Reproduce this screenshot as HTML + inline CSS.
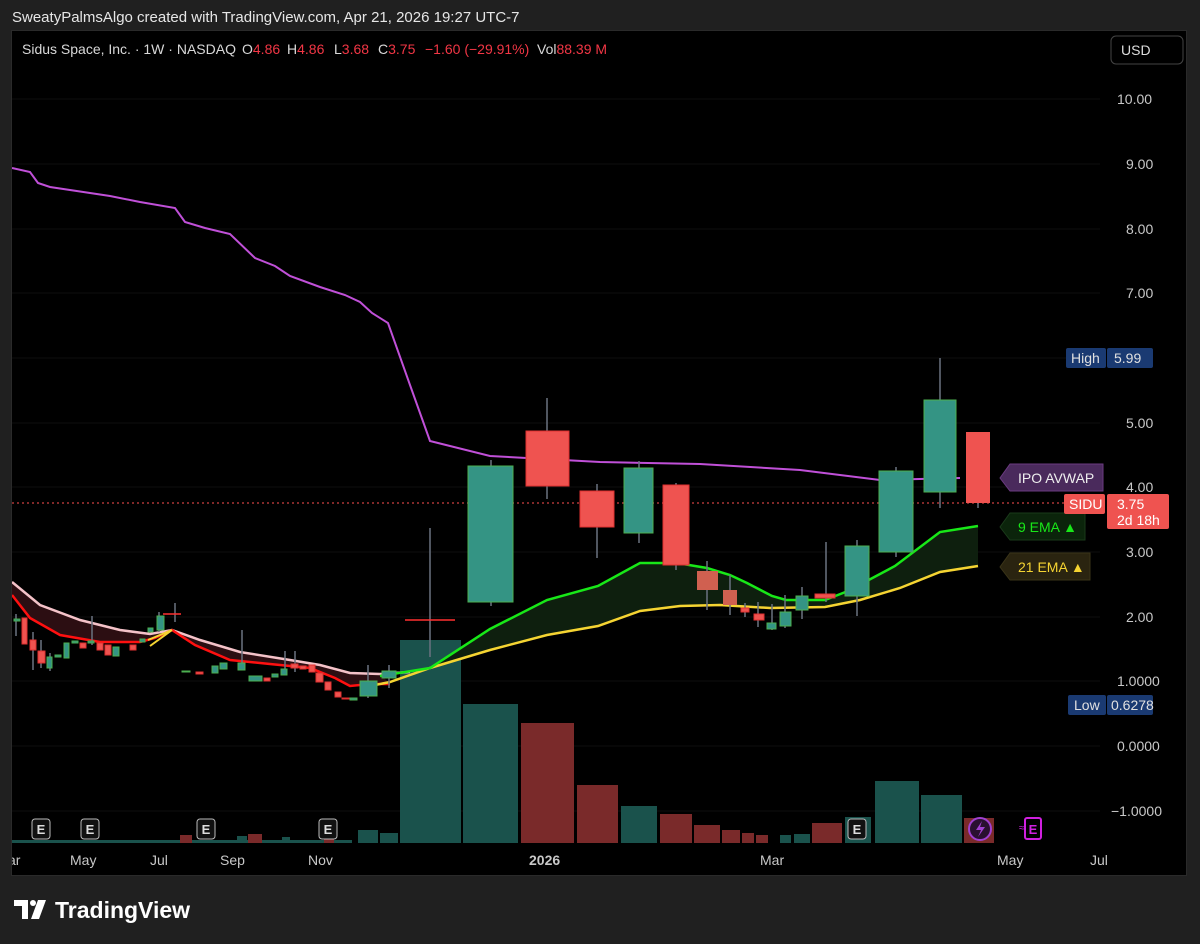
<!DOCTYPE html>
<html><head><meta charset="utf-8"><style>
body{margin:0;width:1200px;height:944px;background:#202020;font-family:"Liberation Sans",sans-serif;overflow:hidden;position:relative}
.t{position:absolute;white-space:nowrap}
</style></head><body>
<div class="t" style="left:12px;top:9px;font-size:15px;color:#e6e6e6">SweatyPalmsAlgo created with TradingView.com, Apr 21, 2026 19:27 UTC-7</div>
<div style="position:absolute;left:11px;top:30px;width:1176px;height:846px;background:#000;border:1px solid #2a2a2a;box-sizing:border-box"></div>
<svg style="position:absolute;left:0;top:0" width="1200" height="944" font-family="Liberation Sans, sans-serif">
<defs><clipPath id="c"><rect x="12" y="31" width="1174" height="844"/></clipPath></defs>
<g clip-path="url(#c)">
<g stroke="#0e0e0e" stroke-width="1">
<line x1="12" x2="1100" y1="99" y2="99"/><line x1="12" x2="1100" y1="164" y2="164"/><line x1="12" x2="1100" y1="229" y2="229"/><line x1="12" x2="1100" y1="293" y2="293"/><line x1="12" x2="1100" y1="358" y2="358"/><line x1="12" x2="1100" y1="423" y2="423"/><line x1="12" x2="1100" y1="487" y2="487"/><line x1="12" x2="1100" y1="552" y2="552"/><line x1="12" x2="1100" y1="617" y2="617"/><line x1="12" x2="1100" y1="681" y2="681"/><line x1="12" x2="1100" y1="746" y2="746"/><line x1="12" x2="1100" y1="811" y2="811"/>
</g>
<!-- volume -->
<g fill="#1a524c">
<rect x="400" y="640" width="61" height="203"/><rect x="463" y="704" width="55" height="139"/><rect x="621" y="806" width="36" height="37"/><rect x="358" y="830" width="20" height="13"/><rect x="380" y="833" width="18" height="10"/><rect x="780" y="835" width="11" height="8"/><rect x="794" y="834" width="16" height="9"/><rect x="845" y="817" width="26" height="26"/><rect x="875" y="781" width="44" height="62"/><rect x="921" y="795" width="41" height="48"/>
<rect x="12" y="840" width="340" height="3"/><rect x="237" y="836" width="10" height="7"/><rect x="282" y="837" width="8" height="6"/>
</g>
<g fill="#7a2a2a">
<rect x="521" y="723" width="53" height="120"/><rect x="577" y="785" width="41" height="58"/><rect x="660" y="814" width="32" height="29"/><rect x="694" y="825" width="26" height="18"/><rect x="722" y="830" width="18" height="13"/><rect x="742" y="833" width="12" height="10"/><rect x="756" y="835" width="12" height="8"/><rect x="812" y="823" width="30" height="20"/><rect x="964" y="818" width="30" height="25"/>
<rect x="180" y="835" width="12" height="8"/><rect x="248" y="834" width="14" height="9"/><rect x="324" y="835" width="10" height="8"/>
</g>
<!-- left EMA band -->
<path d="M12,582 L40,605 L80,620 L120,630 L150,634 L172,630 L200,640 L240,652 L290,660 L320,665 L350,673 L380,674 L390,684 L350,686 L310,668 L270,664 L230,660 L195,645 L172,630 L140,642 L100,642 L60,635 L30,618 L12,595Z" fill="#2c0e12"/>
<polyline points="12,582 40,605 80,620 120,630 150,634 172,630 200,640 240,652 290,660 320,665 350,673 380,674 410,672" fill="none" stroke="#f4c2c8" stroke-width="2.5"/>
<polyline points="12,595 30,618 60,635 100,642 140,642 155,638 172,630 195,645 230,660 270,664 310,668 335,678 350,686 370,684 390,684" fill="none" stroke="#ff1010" stroke-width="2.5"/>
<!-- right EMA band -->
<path d="M430,668 L490,629 L547,600 L598,586 L640,563 L677,563 L707,568 L730,575 L747,583 L772,596 L786,600 L825,600 L848,591 L895,566 L940,532 L978,526 L978,566 L940,572 L900,588 L860,600 L825,607 L770,608 L720,605 L680,606 L640,611 L598,626 L547,635 L490,650Z" fill="#0e1f0e"/>
<polyline points="360,688 390,682 430,668 490,650 547,635 598,626 640,611 680,606 720,605 770,608 825,607 860,600 900,588 940,572 978,566" fill="none" stroke="#f5d432" stroke-width="2.5"/>
<polyline points="148,640 172,630 150,646" fill="none" stroke="#f5d432" stroke-width="2"/>
<polyline points="380,676 430,668 490,629 547,600 598,586 640,563 677,563 707,568 730,575 747,583 772,596 786,600 825,600 848,591 895,566 940,532 978,526" fill="none" stroke="#18e818" stroke-width="2.5"/>
<!-- AVWAP -->
<polyline points="12,168 30,172 38,183 50,187 70,190 110,196 140,202 175,208 185,222 205,228 230,234 255,258 275,266 290,276 320,287 345,295 360,302 372,313 388,323 410,385 430,441 490,456 600,462 700,464 800,470 880,480 960,478" fill="none" stroke="#c050d8" stroke-width="2"/>
<line x1="12" x2="1100" y1="503" y2="503" stroke="#ff5050" stroke-dasharray="2,3" stroke-width="1"/>
<!-- wicks -->
<g stroke="#6a7280" stroke-width="1.5">
<line x1="430" x2="430" y1="528" y2="657"/><line x1="491" x2="491" y1="460" y2="606"/><line x1="547" x2="547" y1="398" y2="499"/><line x1="597" x2="597" y1="484" y2="558"/><line x1="639" x2="639" y1="461" y2="543"/><line x1="676" x2="676" y1="483" y2="570"/><line x1="707" x2="707" y1="561" y2="610"/><line x1="730" x2="730" y1="575" y2="615"/><line x1="745" x2="745" y1="603" y2="617"/><line x1="758" x2="758" y1="602" y2="627"/><line x1="772" x2="772" y1="604" y2="630"/><line x1="785" x2="785" y1="595" y2="628"/><line x1="802" x2="802" y1="587" y2="619"/><line x1="826" x2="826" y1="542" y2="602"/><line x1="857" x2="857" y1="540" y2="616"/><line x1="896" x2="896" y1="467" y2="557"/><line x1="940" x2="940" y1="358" y2="508"/><line x1="978" x2="978" y1="500" y2="508"/>
<line x1="16" x2="16" y1="614" y2="636"/><line x1="33" x2="33" y1="632" y2="670"/><line x1="41" x2="41" y1="640" y2="668"/><line x1="50" x2="50" y1="653" y2="671"/><line x1="92" x2="92" y1="616" y2="645"/><line x1="159" x2="159" y1="612" y2="632"/><line x1="175" x2="175" y1="603" y2="622"/><line x1="242" x2="242" y1="630" y2="670"/><line x1="285" x2="285" y1="651" y2="675"/><line x1="295" x2="295" y1="651" y2="672"/><line x1="368" x2="368" y1="665" y2="698"/><line x1="389" x2="389" y1="665" y2="688"/>
</g>
<!-- candles -->
<g fill="#349484" stroke="#4caf50" stroke-width="1">
<rect x="468" y="466" width="45" height="136"/><rect x="624" y="468" width="29" height="65"/><rect x="780" y="612" width="11" height="14"/><rect x="767" y="623" width="9" height="6"/><rect x="796" y="596" width="12" height="14"/><rect x="845" y="546" width="24" height="50"/><rect x="879" y="471" width="34" height="81"/><rect x="924" y="400" width="32" height="92"/>
<rect x="360" y="681" width="17" height="15"/><rect x="382" y="671" width="14" height="7"/>
<rect x="14" y="619" width="6" height="2"/><rect x="47" y="657" width="5" height="11"/><rect x="55" y="655" width="6" height="2"/><rect x="64" y="643" width="5" height="15"/><rect x="72" y="641" width="6" height="2"/><rect x="88" y="641" width="6" height="2"/><rect x="113" y="647" width="6" height="9"/><rect x="140" y="639" width="5" height="3"/><rect x="148" y="628" width="5" height="4"/><rect x="157" y="616" width="7" height="14"/><rect x="182" y="671" width="8" height="1"/><rect x="212" y="666" width="6" height="7"/><rect x="220" y="663" width="7" height="6"/><rect x="238" y="663" width="7" height="7"/><rect x="249" y="676" width="13" height="5"/><rect x="272" y="674" width="6" height="3"/><rect x="281" y="669" width="6" height="6"/><rect x="350" y="698" width="7" height="2"/>
</g>
<g fill="#ef5350" stroke="#e03030" stroke-width="1">
<rect x="526" y="431" width="43" height="55"/><rect x="580" y="491" width="34" height="36"/><rect x="663" y="485" width="26" height="80"/><rect x="741" y="608" width="8" height="4"/><rect x="754" y="614" width="10" height="6"/><rect x="815" y="594" width="20" height="4"/><rect x="966" y="432" width="24" height="71" stroke="none"/>
<rect x="22" y="618" width="5" height="26"/><rect x="30" y="640" width="6" height="10"/><rect x="38" y="651" width="7" height="12"/><rect x="80" y="643" width="6" height="5"/><rect x="97" y="643" width="6" height="7"/><rect x="105" y="645" width="6" height="10"/><rect x="130" y="645" width="6" height="5"/><rect x="196" y="672" width="7" height="2"/><rect x="264" y="678" width="6" height="3"/><rect x="291" y="664" width="7" height="4"/><rect x="300" y="666" width="6" height="3"/><rect x="309" y="665" width="6" height="7"/><rect x="316" y="673" width="7" height="9"/><rect x="325" y="682" width="6" height="8"/><rect x="335" y="692" width="6" height="5"/><rect x="342" y="698" width="7" height="1"/>
</g>
<rect x="697" y="571" width="21" height="19" fill="#d06050"/><rect x="723" y="590" width="14" height="15" fill="#d06050"/>
<line x1="405" x2="455" y1="620" y2="620" stroke="#ff3030" stroke-width="1.5"/>
<line x1="163" x2="181" y1="614" y2="614" stroke="#ff3030" stroke-width="1.5"/>
<!-- E markers -->
<g font-size="13" font-weight="bold" fill="#ddd" text-anchor="middle">
<g><rect x="32" y="819" width="18" height="20" rx="3" fill="#111" stroke="#bbb"/><text x="41" y="834">E</text></g>
<g><rect x="81" y="819" width="18" height="20" rx="3" fill="#111" stroke="#bbb"/><text x="90" y="834">E</text></g>
<g><rect x="197" y="819" width="18" height="20" rx="3" fill="#111" stroke="#bbb"/><text x="206" y="834">E</text></g>
<g><rect x="319" y="819" width="18" height="20" rx="3" fill="#111" stroke="#bbb"/><text x="328" y="834">E</text></g>
<g><rect x="848" y="819" width="18" height="20" rx="3" fill="#111" stroke="#bbb"/><text x="857" y="834">E</text></g>
</g>
<circle cx="980" cy="829" r="11" fill="#2a1030" stroke="#a040d0" stroke-width="2"/>
<path d="M982,821 L976,830 L981,830 L978,837 L985,827 L980,827Z" fill="#a040d0"/>
<rect x="1025" y="818" width="16" height="21" rx="2" fill="none" stroke="#d020e0" stroke-width="2"/>
<text x="1033" y="834" font-size="13" font-weight="bold" fill="#d020e0" text-anchor="middle">E</text>
<text x="1019" y="831" font-size="10" fill="#d020e0">≈</text>
<!-- axis labels -->
<g font-size="14" fill="#c8c8c8">
<text x="1117" y="104">10.00</text><text x="1126" y="169">9.00</text><text x="1126" y="234">8.00</text><text x="1126" y="298">7.00</text><text x="1126" y="428">5.00</text><text x="1126" y="492">4.00</text><text x="1126" y="557">3.00</text><text x="1126" y="622">2.00</text><text x="1117" y="686">1.0000</text><text x="1117" y="751">0.0000</text><text x="1111" y="816">−1.0000</text>
</g>
<g font-size="14" fill="#c8c8c8">
<text x="8" y="865">ar</text><text x="70" y="865">May</text><text x="150" y="865">Jul</text><text x="220" y="865">Sep</text><text x="308" y="865">Nov</text><text x="529" y="865" font-weight="bold">2026</text><text x="760" y="865">Mar</text><text x="997" y="865">May</text><text x="1090" y="865">Jul</text>
</g>
</g>
<!-- price labels -->
<rect x="1066" y="348" width="40" height="20" rx="2" fill="#1a3a72"/><rect x="1107" y="348" width="46" height="20" rx="2" fill="#1a3a72"/>
<text x="1071" y="363" font-size="14" fill="#e0e0e0">High</text><text x="1114" y="363" font-size="14" fill="#e0e0e0">5.99</text>
<rect x="1068" y="695" width="38" height="20" rx="2" fill="#1a3a72"/><rect x="1107" y="695" width="46" height="20" rx="2" fill="#1a3a72"/>
<text x="1074" y="710" font-size="14" fill="#e0e0e0">Low</text><text x="1111" y="710" font-size="14" fill="#e0e0e0">0.6278</text>
<path d="M1010,464 L1103,464 L1103,491 L1010,491 L1000,478Z" fill="#4a2a5c" stroke="#6a3a80"/>
<text x="1018" y="483" font-size="14" fill="#eee">IPO AVWAP</text>
<path d="M1010,513 L1085,513 L1085,540 L1010,540 L1000,527Z" fill="#0b240b" stroke="#1a3a1a"/>
<text x="1018" y="532" font-size="14" fill="#18e818">9 EMA ▲</text>
<path d="M1010,553 L1090,553 L1090,580 L1010,580 L1000,567Z" fill="#2a2410" stroke="#3a3418"/>
<text x="1018" y="572" font-size="14" fill="#f5d432">21 EMA ▲</text>
<rect x="1064" y="494" width="41" height="20" rx="2" fill="#ef5350"/>
<text x="1069" y="509" font-size="14" fill="#fff">SIDU</text>
<rect x="1107" y="494" width="62" height="35" rx="2" fill="#ef5350"/>
<text x="1117" y="509" font-size="14" fill="#fff">3.75</text><text x="1117" y="525" font-size="14" fill="#fff">2d 18h</text>
<!-- USD -->
<rect x="1111" y="36" width="72" height="28" rx="5" fill="#000" stroke="#444"/>
<text x="1121" y="55" font-size="14" fill="#ddd">USD</text>
<!-- header -->
<g font-size="14" fill="#d8d8d8">
<text x="22" y="54">Sidus Space, Inc. · 1W · NASDAQ</text>
<text x="242" y="54">O<tspan fill="#f23645">4.86</tspan></text>
<text x="287" y="54">H<tspan fill="#f23645">4.86</tspan></text>
<text x="334" y="54">L<tspan fill="#f23645">3.68</tspan></text>
<text x="378" y="54">C<tspan fill="#f23645">3.75</tspan></text>
<text x="425" y="54" fill="#f23645">−1.60 (−29.91%)</text>
<text x="537" y="54">Vol<tspan fill="#f23645">88.39 M</tspan></text>
</g>
<!-- logo -->
<path d="M14,900 L28,900 L28,919 L22,919 L22,906 L14,906Z" fill="#fff"/><circle cx="33" cy="903" r="3" fill="#fff"/><path d="M38,900 L46,900 L39,919 L31,919Z" fill="#fff"/>
<text x="55" y="918" font-size="23" font-weight="bold" fill="#fff">TradingView</text>
</svg>
</body></html>
